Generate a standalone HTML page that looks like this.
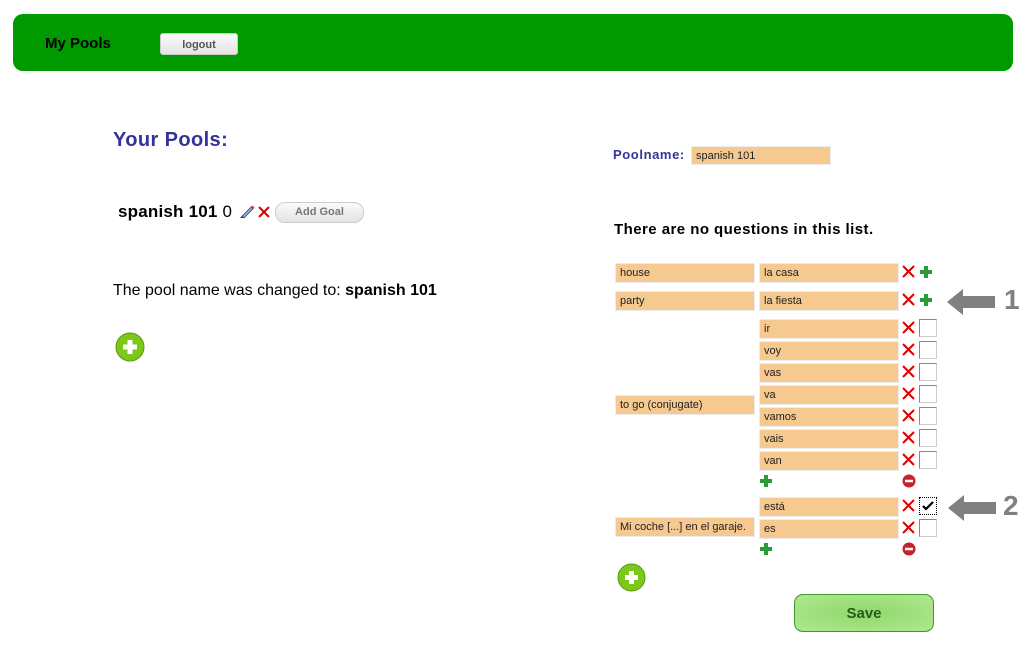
<!DOCTYPE html>
<html><head><meta charset="utf-8"><style>
body{margin:0;width:1026px;height:648px;background:#fff;font-family:"Liberation Sans",sans-serif;position:relative;overflow:hidden}
.a{position:absolute}
.hdr{left:13px;top:14px;width:1000px;height:57px;background:#009900;border-radius:10px}
.btn{background:linear-gradient(#fafafa,#e4e4e4);border:1px solid #ccc;border-radius:3px;color:#555;font-weight:bold;font-size:11px;text-align:center}
.in{background:#f6c990;border:1px solid #ececec;font-size:11px;color:#222;padding-left:4px;box-sizing:border-box;height:20px;line-height:19px}
.l{left:615px;width:140px}
.r{left:759px;width:140px}
.cb{width:18px;height:18px;border:1px solid #888;border-right-color:#ccc;border-bottom-color:#ccc;box-sizing:border-box;background:#fff}
</style></head><body>
<div class="a hdr"></div>
<div class="a" style="left:45px;top:35px;font-size:15px;font-weight:bold;color:#000">My Pools</div>
<div class="a btn" style="left:160px;top:33px;width:76px;height:20px;line-height:22px">logout</div>

<div class="a" style="left:113px;top:129px;font-size:20px;font-weight:bold;color:#333399;letter-spacing:.4px">Your Pools:</div>
<div class="a" style="left:118px;top:202px;font-size:17px;letter-spacing:.2px"><b>spanish 101</b> 0</div>
<svg class="a" style="left:239px;top:204px" width="17" height="15" viewBox="0 0 17 15"><path d="M3 12 L12 3 L14 5 L5 14 Z" fill="#8aa0e0" stroke="#445" stroke-width=".7"/><path d="M12 3 L13.5 1.5 L15.5 3.5 L14 5Z" fill="#d33"/><path d="M1 14 L3 12 L5 14Z" fill="#333"/></svg>
<svg class="a" style="left:257px;top:205px" width="14" height="14"><path d="M2 2L12 12M12 2L2 12" stroke="#d00" stroke-width="2"/></svg>
<div class="a btn" style="left:275px;top:202px;width:87px;height:19px;line-height:19px;border-radius:10px;color:#777">Add Goal</div>
<div class="a" style="left:113px;top:282px;font-size:16px">The pool name was changed to: <b>spanish 101</b></div>
<svg class="a" style="left:115px;top:332px" width="30" height="30"><circle cx="15" cy="15" r="14" fill="#7cc81a" stroke="#5a9a10"/><path d="M15 8V22M8 15H22" stroke="#fff" stroke-width="5"/></svg>

<div class="a" style="left:613px;top:147px;font-size:13px;font-weight:bold;color:#333399;letter-spacing:.6px">Poolname:</div>
<div class="a in" style="left:691px;top:146px;width:140px;height:19px">spanish 101</div>
<div class="a" style="left:614px;top:221px;font-size:15px;font-weight:bold;letter-spacing:.45px">There are no questions in this list.</div>

<div class="a in l" style="top:263px">house</div>
<div class="a in l" style="top:291px">party</div>
<div class="a in l" style="top:395px">to go (conjugate)</div>
<div class="a in l" style="top:517px">Mi coche [...] en el garaje.</div>

<div class="a in r" style="top:263px">la casa</div>
<div class="a in r" style="top:291px">la fiesta</div>
<div class="a in r" style="top:319px">ir</div>
<div class="a in r" style="top:341px">voy</div>
<div class="a in r" style="top:363px">vas</div>
<div class="a in r" style="top:385px">va</div>
<div class="a in r" style="top:407px">vamos</div>
<div class="a in r" style="top:429px">vais</div>
<div class="a in r" style="top:451px">van</div>
<div class="a in r" style="top:497px">está</div>
<div class="a in r" style="top:519px">es</div>

<svg class="a" style="left:901px;top:263px" width="16" height="300">
<g stroke="#d00" stroke-width="2">
<path d="M2 3L13 14M13 3L2 14"/>
<path d="M2 31L13 42M13 31L2 42"/>
<path d="M2 59L13 70M13 59L2 70"/>
<path d="M2 81L13 92M13 81L2 92"/>
<path d="M2 103L13 114M13 103L2 114"/>
<path d="M2 125L13 136M13 125L2 136"/>
<path d="M2 147L13 158M13 147L2 158"/>
<path d="M2 169L13 180M13 169L2 180"/>
<path d="M2 191L13 202M13 191L2 202"/>
<path d="M2 237L13 248M13 237L2 248"/>
<path d="M2 259L13 270M13 259L2 270"/>
</g></svg>
<svg class="a" style="left:919px;top:265px" width="14" height="14"><path d="M7 1V13M1 7H13" stroke="#2a9a3a" stroke-width="4"/></svg>
<svg class="a" style="left:919px;top:293px" width="14" height="14"><path d="M7 1V13M1 7H13" stroke="#2a9a3a" stroke-width="4"/></svg>
<svg class="a" style="left:759px;top:474px" width="14" height="14"><path d="M7 1V13M1 7H13" stroke="#2a9a3a" stroke-width="4"/></svg>
<svg class="a" style="left:759px;top:542px" width="14" height="14"><path d="M7 1V13M1 7H13" stroke="#2a9a3a" stroke-width="4"/></svg>
<svg class="a" style="left:902px;top:474px" width="14" height="14"><circle cx="7" cy="7" r="6.5" fill="#c8202a"/><path d="M3 7H11" stroke="#fff" stroke-width="2.5"/></svg>
<svg class="a" style="left:902px;top:542px" width="14" height="14"><circle cx="7" cy="7" r="6.5" fill="#c8202a"/><path d="M3 7H11" stroke="#fff" stroke-width="2.5"/></svg>

<div class="a cb" style="left:919px;top:319px"></div>
<div class="a cb" style="left:919px;top:341px"></div>
<div class="a cb" style="left:919px;top:363px"></div>
<div class="a cb" style="left:919px;top:385px"></div>
<div class="a cb" style="left:919px;top:407px"></div>
<div class="a cb" style="left:919px;top:429px"></div>
<div class="a cb" style="left:919px;top:451px"></div>
<div class="a cb" style="left:919px;top:497px;border:1px dotted #000"><svg width="16" height="16"><path d="M3 8L6 11L13 4" stroke="#000" stroke-width="2.2" fill="none"/></svg></div>
<div class="a cb" style="left:919px;top:519px"></div>

<svg class="a" style="left:617px;top:563px" width="29" height="29"><circle cx="14.5" cy="14.5" r="13.5" fill="#7cc81a" stroke="#5a9a10"/><path d="M14.5 8V21M8 14.5H21" stroke="#fff" stroke-width="5"/></svg>

<div class="a" style="left:794px;top:594px;width:138px;height:36px;border:1px solid #3a9a2a;border-radius:9px;background:radial-gradient(ellipse at center,#8fd86a,#b0e890);color:#2d5a1e;font-weight:bold;font-size:15px;text-align:center;line-height:37px">Save</div>

<svg class="a" style="left:946px;top:287px" width="50" height="30"><path d="M1 15L17 2V9H49V21H17V28Z" fill="#808080"/></svg>
<div class="a" style="left:1004px;top:284px;font-size:28px;font-weight:bold;color:#808080">1</div>
<svg class="a" style="left:947px;top:493px" width="50" height="30"><path d="M1 15L17 2V9H49V21H17V28Z" fill="#808080"/></svg>
<div class="a" style="left:1003px;top:490px;font-size:28px;font-weight:bold;color:#808080">2</div>
</body></html>
